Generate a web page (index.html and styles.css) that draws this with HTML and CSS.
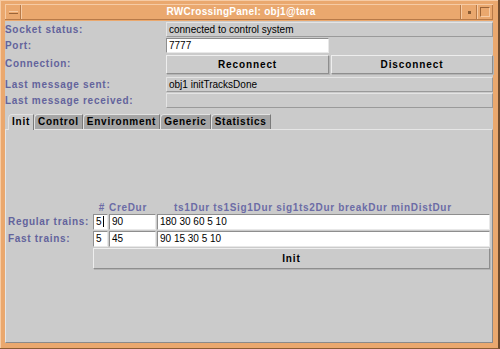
FILE: index.html
```html
<!DOCTYPE html>
<html lang="en">
<head>
  <meta charset="UTF-8">
  <title>RWCrossingPanel: obj1@tara</title>
  <link rel="stylesheet" href="styles.css">
</head>
<body>

<div class="window">
  <div class="titlebar">
    <div class="tb-btn"><span class="dash"></span></div>
    <div class="title">RWCrossingPanel: obj1@tara</div>
    <div class="tb-btn"><span class="dot"></span></div>
    <div class="tb-btn"><span class="square"></span></div>
  </div>

  <div class="content">
    <div class="status">
      <div class="label">Socket status:</div>
      <div class="field wide">connected to control system</div>

      <div class="label">Port:</div>
      <div class="input">7777</div>
      <div class="blank"></div>

      <div class="label">Connection:</div>
      <button class="btn">Reconnect</button>
      <button class="btn">Disconnect</button>

      <div class="label">Last message sent:</div>
      <div class="field wide">obj1 initTracksDone</div>

      <div class="label">Last message received:</div>
      <div class="field wide"></div>
    </div>

    <div class="tabs">
      <div class="tab active">Init</div>
      <div class="tab">Control</div>
      <div class="tab">Environment</div>
      <div class="tab">Generic</div>
      <div class="tab">Statistics</div>
    </div>

    <div class="tab-panel">
      <div class="init-table">
        <div></div>
        <div class="head num">#</div>
        <div class="head">CreDur</div>
        <div class="head durs">ts1Dur ts1Sig1Dur sig1ts2Dur breakDur minDistDur</div>

        <div class="label row-label">Regular trains:</div>
        <div class="input cell"><span class="caret">5</span></div>
        <div class="input cell">90</div>
        <div class="input cell">180 30 60 5 10</div>

        <div class="label row-label">Fast trains:</div>
        <div class="input cell">5</div>
        <div class="input cell">45</div>
        <div class="input cell">90 15 30 5 10</div>

        <div></div>
        <button class="btn init-btn">Init</button>
      </div>
    </div>
  </div>
</div>

</body>
</html>
```

FILE: styles.css
```css
* { margin: 0; padding: 0; box-sizing: border-box; }
body {
  width: 500px;
  height: 349px;
  overflow: hidden;
  background: #cbcbcb;
  font-family: 'Liberation Sans', Arial, sans-serif;
  font-size: 10px;
  color: #000;
}
.window {
  width: 500px;
  height: 349px;
  background: #eaa86e;
  padding: 4px 5px 5px 5px;
  border-right: 2px solid #6e4a2c;
  border-bottom: 1px solid #8a5c34;
  box-shadow: inset 1px 1px 0 #f6cba4;
  display: flex;
  flex-direction: column;
}
.titlebar {
  height: 16px;
  display: flex;
  border-top: 1px solid #f6cba4;
  border-bottom: 1px solid #b87a48;
}
.tb-btn {
  width: 16px;
  display: flex;
  align-items: center;
  justify-content: center;
  border-left: 1px solid #f6cba4;
  border-right: 1px solid #b87a48;
}
.dash {
  width: 9px;
  height: 3px;
  border-top: 1px solid #f6cba4;
  border-bottom: 1px solid #9a6438;
  background: #eaa86e;
}
.dot {
  width: 3px;
  height: 3px;
  background: #8a5c34;
}
.square {
  width: 10px;
  height: 10px;
  border: 1px solid #9a6438;
  border-right-color: #f6cba4;
  border-bottom-color: #f6cba4;
}
.title {
  flex: 1;
  text-align: center;
  color: #fff;
  font-weight: bold;
  font-size: 10px;
  line-height: 14px;
  letter-spacing: 0.3px;
  border-left: 1px solid #f6cba4;
  border-right: 1px solid #b87a48;
}
.content {
  flex: 1;
  margin-top: 1px;
  background: #cbcbcb;
  display: flex;
  flex-direction: column;
}
.status {
  display: grid;
  grid-template-columns: 159px 163px 162px;
  grid-template-rows: 16px 17px 22px 16px 15px;
  column-gap: 2px;
  padding-top: 1px;
}
.status > * {
  height: 15px;
}
.label {
  color: #63639c;
  font-weight: bold;
  letter-spacing: 0.7px;
  line-height: 15px;
  white-space: nowrap;
}
.field {
  border: 1px solid #e4e4e4;
  border-right-color: #9a9a9a;
  border-bottom-color: #9a9a9a;
  padding-left: 2px;
  line-height: 13px;
}
.wide { grid-column: span 2; }
.input {
  background: #fff;
  border: 1px solid #8e8e8e;
  border-right-color: #e8e8e8;
  border-bottom-color: #e8e8e8;
  padding-left: 2px;
  line-height: 13px;
  white-space: nowrap;
  overflow: hidden;
}
.btn {
  font-family: inherit;
  font-size: 10px;
  font-weight: bold;
  letter-spacing: 0.9px;
  color: #000;
  background: #cbcbcb;
  border: 1px solid #eeeeee;
  border-right-color: #8e8e8e;
  border-bottom-color: #8e8e8e;
  box-shadow: 1px 1px 0 #b4b4b4;
}
.status > .btn {
  height: 19px;
}
.status > .label:nth-child(6) {
  line-height: 17px;
}
.tabs {
  display: flex;
  align-items: flex-end;
  padding-left: 3px;
  margin-top: 5px;
  height: 16px;
}
.tab {
  height: 15px;
  padding: 0 3px;
  background: #a6a6a6;
  border: 1px solid #e2e2e2;
  border-right-color: #7a7a7a;
  border-bottom: none;
  border-top-left-radius: 4px 5px;
  font-weight: bold;
  letter-spacing: 0.75px;
  line-height: 14px;
}
.tab.active {
  height: 16px;
  background: #cbcbcb;
  margin-bottom: -1px;
  position: relative;
  z-index: 1;
}
.tab-panel {
  flex: 1;
  border: 1px solid #e6e6e6;
  border-right-color: #8a8a8a;
  border-bottom-color: #8a8a8a;
  display: flex;
  align-items: center;
  padding: 0 2px;
}
.init-table {
  width: 100%;
  display: grid;
  grid-template-columns: 84px 15px 47px 1fr;
  grid-template-rows: 11px 16px 16px 21px;
  column-gap: 1px;
  row-gap: 1px;
  margin-top: -2px;
}
.head {
  color: #6c6ca6;
  font-weight: bold;
  letter-spacing: 0.68px;
  line-height: 11px;
  white-space: nowrap;
}
.head.num {
  text-align: right;
  padding-right: 3px;
}
.head.durs {
  padding-left: 17px;
}
.row-label {
  line-height: 16px;
}
.cell {
  line-height: 14px;
}
.caret {
  border-right: 1px solid #000;
  padding-right: 1px;
}
.init-btn {
  grid-column: 2 / span 3;
}
```
